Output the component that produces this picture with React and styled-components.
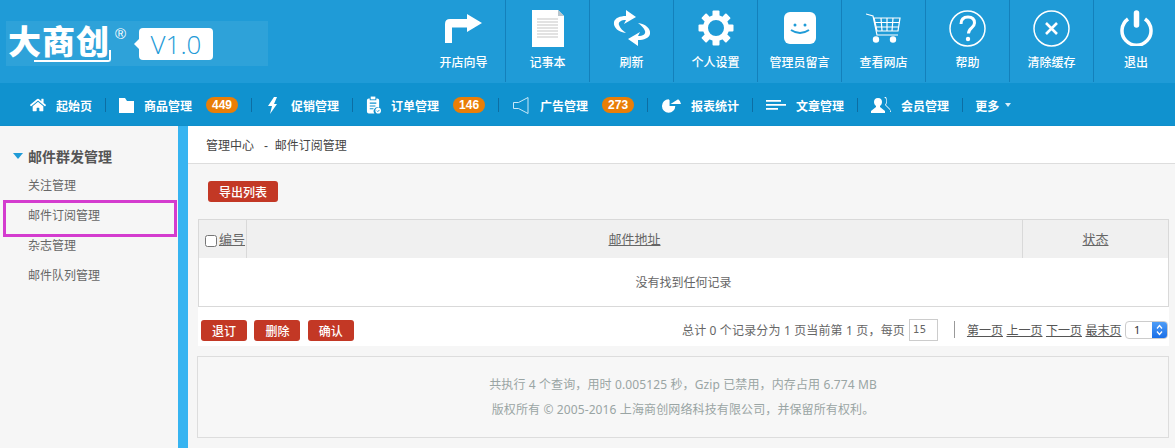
import React from "react";
import styled, { createGlobalStyle } from "styled-components";
import { FaHome } from "react-icons/fa";

const CJK = `"Liberation Sans", "Noto Sans CJK SC", sans-serif`;
const WIDE = `"Noto Sans", "Noto Sans CJK SC", sans-serif`;

const Global = createGlobalStyle`
  html, body { margin: 0; padding: 0; background: #fff; }
  body { font-family: ${CJK}; font-size: 12px; color: #555; overflow: hidden; }
  a { color: inherit; }
`;

const Page = styled.div`
  width: 1175px;
  height: 448px;
  display: flex;
  flex-direction: column;
  overflow: hidden;
`;

const Header = styled.header`
  height: 83px;
  background: #1f9bd7;
  display: flex;
  justify-content: space-between;
`;

const LogoBox = styled.div`
  margin: 21px 0 0 6px;
  width: 262px;
  height: 45px;
  background: rgba(255, 255, 255, 0.07);
  display: flex;
  align-items: center;
`;

const LogoMark = styled.div`
  position: relative;
  margin-left: 2px;
  width: 102px;
  height: 36px;
  color: #fff;
  font-size: 33px;
  font-weight: 900;
  line-height: 33px;
  letter-spacing: 1px;
  white-space: nowrap;

  &::after {
    content: "";
    position: absolute;
    left: 26px;
    right: -1px;
    bottom: 0;
    height: 10px;
    border: solid #fff;
    border-width: 0 2px 2px 0;
    border-bottom-right-radius: 3px;
  }
`;

const Registered = styled.span`
  margin: -20px 0 0 5px;
  width: 14px;
  color: #fff;
  font-size: 15px;
`;

const Bubble = styled.div`
  position: relative;
  margin: 1px 0 0 10px;
  width: 74px;
  height: 32px;
  background: #fff;
  border-radius: 4px;
  color: #1f9bd7;
  font-family: "Open Sans", sans-serif;
  font-size: 26px;
  font-weight: 300;
  line-height: 32px;
  text-align: center;

  &::before {
    content: "";
    position: absolute;
    left: -5px;
    top: 11px;
    border: 5px solid transparent;
    border-left: 0;
    border-right-color: #fff;
  }
`;

const TopTools = styled.div`
  display: flex;
  margin-right: -3px;
`;

const ToolButton = styled.div`
  width: 84px;
  height: 82px;
  box-sizing: border-box;
  border-right: ${(p) => (p.$last ? "0" : "1px solid #1480bb")};
  display: flex;
  flex-direction: column;
  align-items: center;
  color: #fff;
  font-size: 12px;
`;

const ToolIcon = styled.div`
  height: 56px;
  margin-bottom: -2px;
  display: flex;
  align-items: center;
  justify-content: center;
`;

const ToolLabel = styled.span`
  line-height: 18px;
  font-weight: 500;
`;

const Nav = styled.nav`
  height: 43px;
  box-sizing: border-box;
  padding: 2px 0 0 17px;
  background: #1092cf;
  border-bottom: 1px solid #0f8fcb;
  display: flex;
  align-items: center;
  color: #fff;
`;

const NavItem = styled.div`
  display: flex;
  align-items: center;
  padding: 0 13px 0 ${(p) => (p.$last ? 12 : 13)}px;
  height: 14px;
  border-right: ${(p) => (p.$last ? "0" : "1px solid #0d6ea3")};
  font-weight: 700;
  font-size: 12px;
  white-space: nowrap;
`;

const NavIcon = styled.span`
  width: ${(p) => p.$w}px;
  margin-right: 10px;
  display: flex;
  align-items: center;
  justify-content: center;
`;

const Badge = styled.span`
  margin-left: 14px;
  width: 32px;
  height: 16px;
  border-radius: 8px;
  background: #e97e07;
  font-size: 12px;
  line-height: 16px;
  text-align: center;
`;

const Caret = styled.i`
  margin-left: 6px;
  border: 3px solid transparent;
  border-top: 4px solid #d8eef9;
  border-bottom: 0;
`;

const Body = styled.div`
  flex: 1;
  display: flex;
  min-height: 0;
`;

const Sidebar = styled.aside`
  width: 178px;
  flex: none;
  background: #f6f6f6;
  border-right: 10px solid #36b4f1;
  padding-top: 15px;
`;

const SideTitle = styled.div`
  height: 30px;
  padding-left: 13px;
  display: flex;
  align-items: center;
  font-size: 14px;
  font-weight: 700;
  color: #555;
`;

const SideArrow = styled.i`
  margin-right: 5px;
  border: 5px solid transparent;
  border-top: 6px solid #1f9bd7;
  border-bottom: 0;
`;

const SideItem = styled.div`
  position: relative;
  height: 30px;
  margin-left: 6px;
  margin-right: 3px;
  padding-left: 22px;
  line-height: 30px;
  color: #666;

  ${(p) =>
    p.$marked &&
    `&::after {
      content: "";
      position: absolute;
      inset: -1px -2px -6px -3px;
      border: 3px solid #d43ccf;
    }`}
`;

const Main = styled.main`
  flex: 1;
  background: #f6f6f6;
  min-width: 0;
`;

const Crumb = styled.div`
  height: 37px;
  padding-left: 18px;
  background: #fff;
  border-bottom: 1px solid #ddd;
  line-height: 40px;
  color: #444;
  white-space: pre;
`;

const Content = styled.div`
  padding: 0 6px 0 10px;
`;

const TopBar = styled.div`
  height: 55px;
  padding: 17px 0 0 10px;
  box-sizing: border-box;
`;

const RedButton = styled.button`
  width: ${(p) => p.$w || 46}px;
  height: 21px;
  padding: 0;
  border: 0;
  border-radius: 3px;
  background: #c33825;
  color: #fff;
  font-family: ${CJK};
  font-size: 12px;
  font-weight: 500;
`;

const Table = styled.table`
  width: 971px;
  height: 88px;
  border: 1px solid #d9d9d9;
  border-collapse: separate;
  border-spacing: 0;
  background: #fff;
  table-layout: fixed;
`;

const Th = styled.th`
  width: ${(p) => (p.$w ? `${p.$w}px` : "auto")};
  height: 38px;
  padding: 0 0 2px;
  box-sizing: border-box;
  background: #f0f0f0;
  border-right: ${(p) => (p.$last ? "0" : "1px solid #d9d9d9")};
  font-weight: 400;
  text-align: ${(p) => p.$align || "center"};
  white-space: nowrap;
`;

const Sort = styled.a`
  color: #666;
  font-size: 13px;
  text-decoration: underline;
`;

const Check = styled.input`
  width: 12px;
  height: 12px;
  margin: 0 2px 0 6px;
  vertical-align: -3px;
`;

const EmptyCell = styled.td`
  padding: 0 0 2px;
  text-align: center;
  color: #666;
`;

const ActionBar = styled.div`
  width: 971px;
  height: 39px;
  background: #fff;
  display: flex;
  align-items: center;
  padding: 0 1px 0 3px;
  box-sizing: border-box;
`;

const ActionLeft = styled.div`
  display: flex;
  gap: 7.4px;
  margin-top: 8px;
`;

const Pager = styled.div`
  margin-left: auto;
  margin-top: 6px;
  display: flex;
  align-items: center;
  font-family: ${WIDE};
  color: #666;
  white-space: pre;
`;

const PagerText = styled.span`
  letter-spacing: 0.15px;
`;

const PageSize = styled.span`
  width: 29px;
  height: 22px;
  box-sizing: border-box;
  margin-left: 4px;
  padding-left: 3px;
  border: 1px solid #ccc;
  font-family: "DejaVu Sans", sans-serif;
  font-size: 10px;
  line-height: 20px;
  letter-spacing: 0.5px;
`;

const Sep = styled.i`
  width: 1px;
  height: 17px;
  margin: 0 12px 0 16px;
  background: #999;
`;

const PageLink = styled.a`
  margin-right: 3.5px;
  color: #555;
  text-decoration: underline;
`;

const Select = styled.div`
  width: 43px;
  height: 18px;
  border: 1px solid #ccc;
  border-radius: 4px;
  box-sizing: border-box;
  display: flex;
  justify-content: space-between;
  overflow: hidden;
  background: #fff;
  font-size: 11px;
  line-height: 16px;
  color: #333;
  padding-left: 8px;
`;

const Stepper = styled.span`
  width: 15px;
  background: linear-gradient(#4e9df7, #1a6fe8);
  display: flex;
  align-items: center;
  justify-content: center;
`;

const Footer = styled.footer`
  width: 972px;
  height: 82px;
  margin: 10px 0 0 -1px;
  box-sizing: border-box;
  border: 1px solid #ddd;
  background: #f7f7f7;
  padding-top: 16px;
  font-family: ${WIDE};
  text-align: center;
  color: #9aa5a4;
  line-height: 24.5px;
  letter-spacing: 0.12px;
  white-space: nowrap;
`;

const ArrowIcon = () => (
  <svg width="37" height="29" viewBox="0 0 37 29">
    <path d="M0 29V10Q0 5 5 5H22V0L37 9L22 18V13.500H7V29z" fill="#fff" />
  </svg>
);

const DocIcon = () => (
  <svg width="32" height="37" viewBox="0 0 32 37">
    <path d="M0 0h26l6 6v31H0z" fill="#fff" />
    <path d="M26 0l6 6h-6z" fill="#b9c5cc" />
    <path d="M5 9h21M5 12h21M5 15h21M5 18h21M5 21h21M5 24h21M5 27h21" stroke="#d9d9d9" strokeWidth="1.6" />
  </svg>
);

const crescent = "M13 23C6 22 0 18 1 12C2 8 7 6 13 6L13 0L23 7L11 14L13 10C8 10 5 12 6 15C7 18 10 21 13 23z";

const RefreshIcon = () => (
  <svg width="38" height="36" viewBox="0 0 38 36" fill="#fff">
    <path d={crescent} />
    <path d={crescent} transform="rotate(180 19 18)" />
  </svg>
);

const GearIcon = () => (
  <svg width="36" height="36" viewBox="0 0 36 36">
    <circle cx="18" cy="18" r="10.500" fill="none" stroke="#fff" strokeWidth="5" />
    {[0, 45, 90, 135, 180, 225, 270, 315].map((deg) => (
      <rect key={deg} x="14.500" y="0.500" width="7" height="7" rx="1" fill="#fff" transform={`rotate(${deg} 18 18)`} />
    ))}
  </svg>
);

const SmileIcon = () => (
  <svg width="32" height="32" viewBox="0 0 32 32">
    <rect width="32" height="32" rx="6" fill="#fff" />
    <circle cx="11" cy="13" r="1.500" fill="#1f9bd7" />
    <circle cx="21" cy="13" r="1.500" fill="#1f9bd7" />
    <path d="M7 18q9 6 18 0" fill="none" stroke="#1f9bd7" strokeWidth="2" />
  </svg>
);

const CartIcon = () => (
  <svg width="35" height="30" viewBox="0 0 35 30" fill="none" stroke="#fff" strokeWidth="1.2">
    <path d="M0 1l7 2 4 19h21" />
    <path d="M8 5h26l-2 13H11zM9 9.500h24M10 14h23M15 5l1 13M21 5v13M27 5l-1 13" />
    <circle cx="10" cy="26.500" r="2.600" fill="#fff" />
    <circle cx="27" cy="26.500" r="2.600" fill="#fff" />
  </svg>
);

const HelpIcon = () => (
  <svg width="37" height="37" viewBox="0 0 37 37" fill="none" stroke="#fff">
    <circle cx="18.500" cy="18.500" r="17.500" strokeWidth="1.500" />
    <path d="M12 14q0-7 7-7 6.500 0 6.500 6c0 5-6 5-6 10.500" strokeWidth="3" />
    <circle cx="19" cy="29" r="2.200" fill="#fff" stroke="none" />
  </svg>
);

const ClearIcon = () => (
  <svg width="37" height="37" viewBox="0 0 37 37" fill="none" stroke="#fff">
    <circle cx="18.500" cy="18.500" r="17.500" strokeWidth="1.500" />
    <path d="M13 13l11 11M24 13l-11 11" strokeWidth="2.600" />
  </svg>
);

const PowerIcon = () => (
  <svg width="33" height="36" viewBox="0 0 33 36" fill="none" stroke="#fff">
    <path d="M8 9a14.500 14.500 0 1 0 17 0" strokeWidth="3.500" />
    <path d="M16.500 3v12" strokeWidth="5.500" strokeLinecap="round" />
  </svg>
);

const FolderIcon = () => (
  <svg width="15" height="15" viewBox="0 0 15 15" fill="#fff">
    <path d="M0 0h6l2 3h7v12H0z" />
  </svg>
);

const BoltIcon = () => (
  <svg width="13" height="17" viewBox="0 0 13 17" fill="#fff">
    <path d="M7 0L1 9h4l-2 8 7-10H7l3-7z" />
  </svg>
);

const ClipIcon = () => (
  <svg width="16" height="18" viewBox="0 0 16 18">
    <path d="M1 4q0-2 2-2h1v2h7V2h1q2 0 2 2v8a4 4 0 0 0-5 6H3q-2 0-2-2z" fill="#fff" />
    <path d="M5 0h5v3H5z" fill="#fff" />
    <path d="M4 7h7M4 10h6M4 13h4" stroke="#1092cf" strokeWidth="1.200" />
    <circle cx="13" cy="15" r="3" fill="#fff" />
    <path d="M11.600 15l1 1 1.800-1.800" fill="none" stroke="#1092cf" />
  </svg>
);

const SpeakerIcon = () => (
  <svg width="16" height="17" viewBox="0 0 16 17" fill="none" stroke="#c8e8f8">
    <path d="M.5 5.500h5L15 .5v16l-9.500-5h-5z" />
  </svg>
);

const PieIcon = () => (
  <svg width="21" height="15" viewBox="0 0 21 15" fill="#fff">
    <path d="M8 1A7 7 0 1 0 15 8H9V2z" />
    <path d="M10 6L18 1Q21 3 21 6z" />
  </svg>
);

const LinesIcon = () => (
  <svg width="20" height="10" viewBox="0 0 20 10" fill="#fff">
    <path d="M0 0h15v1.800H0zM0 4h20v1.800H0zM0 8h12v1.800H0z" />
  </svg>
);

const UsersIcon = () => (
  <svg width="20" height="16" viewBox="0 0 20 16" fill="#fff">
    <path d="M7 1c3 0 4 2 4 4s-1 3-2 4v1l5 4v2H0v-2l5-4V9C4 8 3 7 3 5s1-4 4-4z" />
    <path d="M13 0c2 1 3 3 2 6l-1 2 5 5v2h1l-1-3-4-4q2-4 0-8z" />
  </svg>
);

const tools = [
  ["开店向导", <ArrowIcon />],
  ["记事本", <DocIcon />],
  ["刷新", <RefreshIcon />],
  ["个人设置", <GearIcon />],
  ["管理员留言", <SmileIcon />],
  ["查看网店", <CartIcon />],
  ["帮助", <HelpIcon />],
  ["清除缓存", <ClearIcon />],
  ["退出", <PowerIcon />],
];

const navItems = [
  { label: "起始页", w: 16, icon: <FaHome size={16} /> },
  { label: "商品管理", w: 15, icon: <FolderIcon />, badge: 449 },
  { label: "促销管理", w: 16, icon: <BoltIcon /> },
  { label: "订单管理", w: 15, icon: <ClipIcon />, badge: 146 },
  { label: "广告管理", w: 18, icon: <SpeakerIcon />, badge: 273 },
  { label: "报表统计", w: 20, icon: <PieIcon /> },
  { label: "文章管理", w: 20, icon: <LinesIcon /> },
  { label: "会员管理", w: 20, icon: <UsersIcon /> },
];

export default function App() {
  return (
    <Page>
      <Global />
      <Header>
        <LogoBox>
          <LogoMark>大商创</LogoMark>
          <Registered>®</Registered>
          <Bubble>V1.0</Bubble>
        </LogoBox>
        <TopTools>
          {tools.map(([label, icon], i) => (
            <ToolButton key={label} $last={i === tools.length - 1}>
              <ToolIcon>{icon}</ToolIcon>
              <ToolLabel>{label}</ToolLabel>
            </ToolButton>
          ))}
        </TopTools>
      </Header>
      <Nav>
        {navItems.map((item) => (
          <NavItem key={item.label}>
            <NavIcon $w={item.w}>{item.icon}</NavIcon>
            {item.label}
            {item.badge && <Badge>{item.badge}</Badge>}
          </NavItem>
        ))}
        <NavItem $last>
          更多
          <Caret />
        </NavItem>
      </Nav>
      <Body>
        <Sidebar>
          <SideTitle>
            <SideArrow />
            邮件群发管理
          </SideTitle>
          <SideItem>关注管理</SideItem>
          <SideItem $marked>邮件订阅管理</SideItem>
          <SideItem>杂志管理</SideItem>
          <SideItem>邮件队列管理</SideItem>
        </Sidebar>
        <Main>
          <Crumb>管理中心   -  邮件订阅管理</Crumb>
          <Content>
            <TopBar>
              <RedButton $w={70}>导出列表</RedButton>
            </TopBar>
            <Table>
              <thead>
                <tr>
                  <Th $w={48} $align="left">
                    <Check type="checkbox" />
                    <Sort href="#">编号</Sort>
                  </Th>
                  <Th>
                    <Sort href="#">邮件地址</Sort>
                  </Th>
                  <Th $w={145} $last>
                    <Sort href="#">状态</Sort>
                  </Th>
                </tr>
              </thead>
              <tbody>
                <tr>
                  <EmptyCell colSpan={3}>没有找到任何记录</EmptyCell>
                </tr>
              </tbody>
            </Table>
            <ActionBar>
              <ActionLeft>
                <RedButton>退订</RedButton>
                <RedButton>删除</RedButton>
                <RedButton>确认</RedButton>
              </ActionLeft>
              <Pager>
                <PagerText>总计 0 个记录分为 1 页当前第 1 页，每页</PagerText>
                <PageSize>15</PageSize>
                <Sep />
                <PageLink href="#">第一页</PageLink>
                <PageLink href="#">上一页</PageLink>
                <PageLink href="#">下一页</PageLink>
                <PageLink href="#">最末页</PageLink>
                <Select>
                  1
                  <Stepper>
                    <svg width="7" height="12" viewBox="0 0 7 12" fill="none" stroke="#fff" strokeWidth="1.300">
                      <path d="M1 4.500l2.500-3 2.500 3M1 7.500l2.500 3 2.500-3" />
                    </svg>
                  </Stepper>
                </Select>
              </Pager>
            </ActionBar>
            <Footer>
              共执行 4 个查询，用时 0.005125 秒，Gzip 已禁用，内存占用 6.774 MB
              <br />
              版权所有 © 2005-2016 上海商创网络科技有限公司，并保留所有权利。
            </Footer>
          </Content>
        </Main>
      </Body>
    </Page>
  );
}
